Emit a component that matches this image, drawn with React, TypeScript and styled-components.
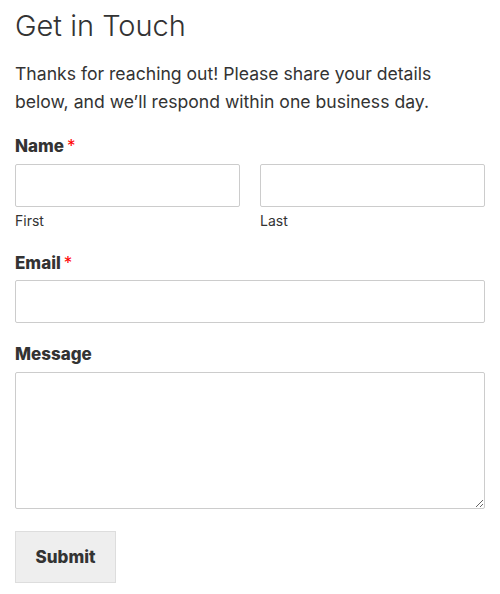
import styled, { createGlobalStyle } from 'styled-components';

const GlobalStyle = createGlobalStyle`
  body {
    margin: 0;
    background: #fff;
    color: #333;
    font-family: Inter, "Liberation Sans", sans-serif;
  }
`;

const Page = styled.div`
  padding: 8px 15px 10px;
`;

const Title = styled.h1`
  margin: 0;
  font-size: 29px;
  font-weight: 300;
  line-height: 36px;
  color: #333;
`;

const Intro = styled.p`
  margin: 16px 0 19px;
  font-size: 17.6px;
  line-height: 28px;
  color: #333;
`;

const Form = styled.form`
  display: flex;
  flex-direction: column;
  gap: 20px;
`;

const Field = styled.div`
  display: flex;
  flex-direction: column;
`;

const Label = styled.label<{ $gap?: number }>`
  font-size: 17px;
  font-weight: 800;
  color: #333;
  line-height: 22px;
  margin-bottom: ${(p) => p.$gap ?? 7}px;
`;

const Required = styled.span`
  color: #ff0000;
  font-weight: 400;
  margin-left: 3px;
`;

const Row = styled.div`
  display: grid;
  grid-template-columns: 1fr 1fr;
  gap: 20px;
`;

const Sub = styled.div`
  display: flex;
  flex-direction: column;
`;

const Input = styled.input`
  box-sizing: border-box;
  width: 100%;
  height: 43px;
  border: 1px solid #ccc;
  border-radius: 2px;
  background: #fff;
  font: inherit;
  padding: 0 10px;
`;

const Hint = styled.span`
  font-size: 14px;
  line-height: 18px;
  margin: 5px 0 2px;
  color: #333;
`;

const TextArea = styled.textarea`
  box-sizing: border-box;
  width: 100%;
  height: 137px;
  border: 1px solid #ccc;
  border-radius: 2px;
  font: inherit;
  padding: 10px;
  display: block;
`;

const Submit = styled.button`
  align-self: flex-start;
  margin-top: 2px;
  width: 101px;
  height: 52px;
  background: #eee;
  border: 1px solid #ddd;
  color: #333;
  font-family: inherit;
  font-size: 17px;
  font-weight: 800;
  cursor: pointer;
`;

export default function App() {
  return (
    <Page>
      <GlobalStyle />
      <Title>Get in Touch</Title>
      <Intro>
        Thanks for reaching out! Please share your details below, and we’ll respond within one business day.
      </Intro>
      <Form onSubmit={(e) => e.preventDefault()}>
        <Field>
          <Label>
            Name<Required>*</Required>
          </Label>
          <Row>
            <Sub>
              <Input type="text" />
              <Hint>First</Hint>
            </Sub>
            <Sub>
              <Input type="text" />
              <Hint>Last</Hint>
            </Sub>
          </Row>
        </Field>
        <Field>
          <Label $gap={6}>
            Email<Required>*</Required>
          </Label>
          <Input type="email" />
        </Field>
        <Field>
          <Label $gap={7}>Message</Label>
          <TextArea />
        </Field>
        <Submit type="submit">Submit</Submit>
      </Form>
    </Page>
  );
}
